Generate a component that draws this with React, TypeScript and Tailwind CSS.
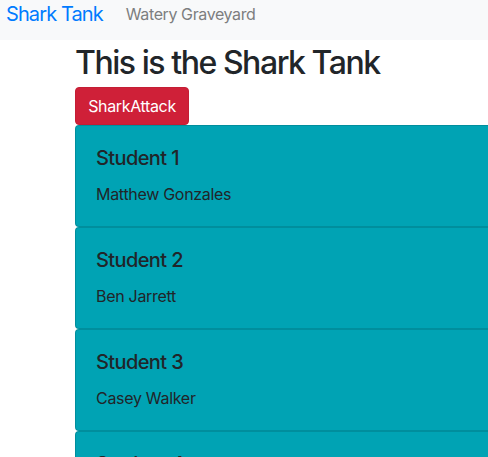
export default function App() {
  const students = [
    { title: "Student 1", name: "Matthew Gonzales" },
    { title: "Student 2", name: "Ben Jarrett" },
    { title: "Student 3", name: "Casey Walker" },
    { title: "Student 4", name: "Student Four" },
  ]

  return (
    <div className="min-h-screen bg-white text-[#212529] font-['Inter','Open_Sans',sans-serif] overflow-hidden">
      {/* Navbar */}
      <nav className="flex items-center h-[40px] bg-[#f8f9fa] pl-[6px] pb-[14px] pt-[1px]">
        <a className="text-[20px] leading-[30px] text-[#007bff] tracking-[-0.9px]">Shark Tank</a>
        <a className="ml-[23px] text-[16px] leading-[24px] text-[#7d7e7f] tracking-[-0.4px]">
          Watery Graveyard
        </a>
      </nav>

      <div className="pl-[75px]">
        <h1 className="text-[32px] leading-[40px] font-medium mt-[3px] mb-[4px] tracking-[-1.45px]">
          This is the Shark Tank
        </h1>
        <button className="h-[38px] w-[114px] rounded-[4px] bg-[#cf2038] text-white text-[16px] leading-[24px] border border-[#c41e35] tracking-[-0.35px]">
          SharkAttack
        </button>

        <div className="flex flex-col">
          {students.map((s) => (
            <div
              key={s.title}
              className="w-[440px] rounded-[4px] border border-black/[0.125] bg-[#00a3b4] px-[20px] py-[20px]"
            >
              <h5 className="text-[20px] leading-[24px] font-medium mb-[12px] tracking-[-0.6px]">
                {s.title}
              </h5>
              <p className="text-[16px] leading-[24px] tracking-[-0.3px]">{s.name}</p>
            </div>
          ))}
        </div>
      </div>
    </div>
  )
}
